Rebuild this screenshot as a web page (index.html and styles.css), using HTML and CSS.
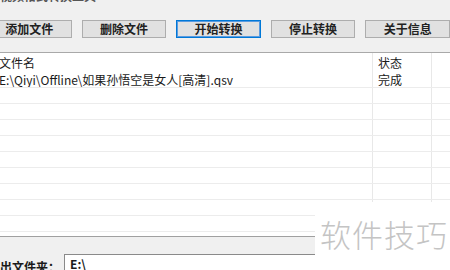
FILE: index.html
```html
<!DOCTYPE html>
<html lang="zh-CN">
<head>
    <meta charset="UTF-8">
    <title>视频格式转换</title>
    <link rel="stylesheet" href="styles.css">
</head>
<body>
    <div class="titlebar"><span class="title">视频格式转换工具</span></div>

    <div class="toolbar">
        <button class="btn">添加文件</button>
        <button class="btn">删除文件</button>
        <button class="btn focused">开始转换</button>
        <button class="btn">停止转换</button>
        <button class="btn">关于信息</button>
    </div>

    <div class="list">
        <div class="row head">
            <div class="col-name">文件名</div>
            <div class="col-state">状态</div>
            <div class="col-rest"></div>
        </div>
        <div class="row">
            <div class="col-name">E:\Qiyi\Offline\如果孙悟空是女人[高清].qsv</div>
            <div class="col-state">完成</div>
            <div class="col-rest"></div>
        </div>
        <div class="row"><div class="col-name"></div><div class="col-state"></div><div class="col-rest"></div></div>
        <div class="row"><div class="col-name"></div><div class="col-state"></div><div class="col-rest"></div></div>
        <div class="row"><div class="col-name"></div><div class="col-state"></div><div class="col-rest"></div></div>
        <div class="row"><div class="col-name"></div><div class="col-state"></div><div class="col-rest"></div></div>
        <div class="row"><div class="col-name"></div><div class="col-state"></div><div class="col-rest"></div></div>
        <div class="row"><div class="col-name"></div><div class="col-state"></div><div class="col-rest"></div></div>
        <div class="row"><div class="col-name"></div><div class="col-state"></div><div class="col-rest"></div></div>
        <div class="row"><div class="col-name"></div><div class="col-state"></div><div class="col-rest"></div></div>
        <div class="row"><div class="col-name"></div><div class="col-state"></div><div class="col-rest"></div></div>
    </div>

    <div class="output">
        <label class="out-label">输出文件夹：</label>
        <div class="out-field">E:\</div>
    </div>

    <!-- 水印 -->
    <div class="watermark">软件技巧</div>
</body>
</html>
```

FILE: styles.css
```css
/* 窗口整体 */
body {
    margin: 0;
    width: 450px;
    height: 270px;
    overflow: hidden;
    background: #f0f0f0;
    font-family: "Noto Sans CJK SC", "Liberation Sans", sans-serif;
    font-size: 12px;
    color: #1a1a1a;
    position: relative;
}

.titlebar { height: 5px; overflow: hidden; }
.title { display: block; margin-top: -11px; line-height: 14px; font-size: 12px; font-weight: 700; color: #555; }

/* 按钮 */
.toolbar { display: flex; gap: 10px; margin: 15px 0 0 -13px; }
.btn {
    width: 86px;
    height: 18px;
    padding: 0;
    background: #e1e1e1;
    border: 1px solid #adadad;
    font-family: inherit;
    font-size: 12px;
    font-weight: 700;
    color: #222;
    line-height: 14px;
}
.btn.focused { border: 1px solid #0078d7; box-shadow: inset 0 0 0 1px #5a9be0; }

/* 列表 */
.list {
    margin-top: 14px;
    height: 183px;
    background: #fff;
    border-top: 1px solid #a9a9a9;
    border-bottom: 1px solid #a0a0a0;
    overflow: hidden;
}
.row { display: flex; height: 15px; border-bottom: 1px solid #ececec; line-height: 15px; }
.row.head { height: 19px; line-height: 19px; border-bottom: none; }
.col-name { width: 373px; margin-left: -1px; white-space: nowrap; overflow: hidden; }
.col-state { width: 59px; padding-left: 5px; border-left: 1px solid #e8e8e8; box-sizing: border-box; }
.col-rest { flex: 1; border-left: 1px solid #e8e8e8; }

/* 输出目录 */
.output { display: flex; align-items: flex-start; margin-top: 17px; }
.out-label { margin-left: -12px; width: 76px; padding-top: 4px; font-weight: 700; }
.out-field {
    flex: 1;
    height: 20px;
    margin-right: -10px;
    padding-left: 5px;
    background: #fff;
    border: 1px solid #8a8a8a;
    font-weight: 700;
    line-height: 18px;
}

.watermark {
    position: absolute;
    left: 315px;
    top: 202px;
    width: 135px;
    height: 68px;
    background: #fff;
    color: #c4c4c4;
    font-size: 31px;
    font-weight: 300;
    line-height: 40px;
    padding: 12px 0 0 5px;
    box-sizing: border-box;
    letter-spacing: 1px;
    white-space: nowrap;
}
```
